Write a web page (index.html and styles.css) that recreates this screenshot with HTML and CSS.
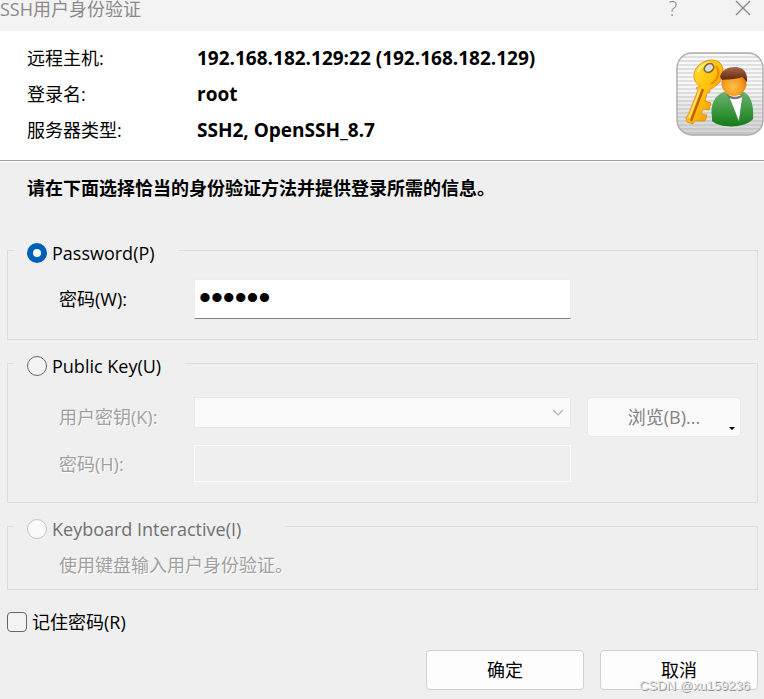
FILE: index.html
```html
<!DOCTYPE html>
<html lang="zh-CN">
<head>
    <meta charset="UTF-8">
    <title>SSH用户身份验证</title>
    <link rel="stylesheet" href="styles.css">
</head>

<body>
    <header class="titlebar">
        <h1>SSH用户身份验证</h1>
        <div class="window-buttons">
            <button type="button" class="window-button" aria-label="帮助">?</button>
            <button type="button" class="window-button" aria-label="关闭">
                <svg width="16" height="16" viewBox="0 0 16 16"><path d="M1 1L15 15M15 1L1 15" stroke="#8a8a8a" stroke-width="1.4" fill="none"/></svg>
            </button>
        </div>
    </header>

    <!-- Host details -->
    <section class="host">
        <dl class="host-info">
            <dt>远程主机:</dt>
            <dd>192.168.182.129:22 (192.168.182.129)</dd>
            <dt>登录名:</dt>
            <dd>root</dd>
            <dt>服务器类型:</dt>
            <dd>SSH2, OpenSSH_8.7</dd>
        </dl>
        <svg class="host-icon" width="88" height="84" viewBox="0 0 88 84">
            <defs>
                <pattern id="stripes" width="4" height="4" patternUnits="userSpaceOnUse">
                    <rect width="4" height="4" fill="#f8f8f8"/>
                    <rect width="4" height="2" fill="#e0e0e0"/>
                </pattern>
                <linearGradient id="shade" x1="0" y1="0" x2="0" y2="1">
                    <stop offset="0.4" stop-color="#999" stop-opacity="0"/>
                    <stop offset="1" stop-color="#999" stop-opacity="0.4"/>
                </linearGradient>
                <linearGradient id="gold" x1="0" y1="0" x2="1" y2="1">
                    <stop offset="0" stop-color="#ffe23a"/>
                    <stop offset="0.5" stop-color="#ffc20a"/>
                    <stop offset="1" stop-color="#e87c00"/>
                </linearGradient>
                <radialGradient id="face" cx="0.45" cy="0.65" r="0.65">
                    <stop offset="0" stop-color="#ffc04a"/>
                    <stop offset="0.6" stop-color="#f39a1c"/>
                    <stop offset="1" stop-color="#c8660c"/>
                </radialGradient>
                <linearGradient id="jacket" x1="0" y1="0" x2="0" y2="1">
                    <stop offset="0" stop-color="#6fb26a"/>
                    <stop offset="0.5" stop-color="#3f9a43"/>
                    <stop offset="1" stop-color="#137a17"/>
                </linearGradient>
                <linearGradient id="hair" x1="0" y1="0" x2="0" y2="1">
                    <stop offset="0" stop-color="#a86844"/>
                    <stop offset="1" stop-color="#5a1e06"/>
                </linearGradient>
            </defs>
            <rect x="1" y="1" width="86" height="82" rx="15" fill="url(#stripes)"/>
            <rect x="1" y="1" width="86" height="82" rx="15" fill="url(#shade)" stroke="#acacac" stroke-width="1.4"/>
            <path d="M24 34C17 30 16 22 21 15C27 8 37 6 43 10C49 15 48 25 43 31C40 34 37 36 34 37L34 40L31 41L29 49L35 51L33 58L27 57L25 62L31 63L29 69L19 69L17 72L11 70L10 66L13 61L22 38L20 36Z" fill="url(#gold)" stroke="#e08a10" stroke-width="0.8"/>
            <path d="M27 37L15 69" stroke="#c85a00" stroke-width="2.4"/>
            <path d="M24 38L13 66" stroke="#ffe880" stroke-width="1.5"/>
            <path d="M40 14C45 20 42 28 35 32" stroke="#f08c00" stroke-width="2.5" fill="none"/>
            <path d="M22 20C24 14 30 11 35 11" stroke="#fff29a" stroke-width="2" fill="none"/>
            <ellipse cx="33" cy="16" rx="5" ry="4" transform="rotate(-35 33 16)" fill="#dcdcdc" stroke="#7d6a2c" stroke-width="1.6"/>
            <path d="M36 65C34 54 38 43 48 40L68 40C76 44 78 56 77 67C70 76 45 77 36 69Z" fill="url(#jacket)"/>
            <path d="M52 43L67 43L63 70Z" fill="#fff"/>
            <path d="M52 43L63 70M67 43L63 70" stroke="#3f8a43" stroke-width="0.8" fill="none"/>
            <path d="M50 41C55 46 63 46 68 41L66 45C61 48 56 48 52 45Z" fill="#777"/>
            <ellipse cx="58" cy="31" rx="12.5" ry="13" fill="url(#face)"/>
            <path d="M44 25C45 18 52 15 59 15C67 15 72 20 71 30C69 28 68 26 66 25C59 28 51 27 46 28Z" fill="url(#hair)"/>
        </svg>
    </section>

    <form class="auth">
        <p class="auth-hint">请在下面选择恰当的身份验证方法并提供登录所需的信息。</p>

        <!-- Password -->
        <fieldset class="method">
            <legend>
                <input type="radio" name="method" id="methodPassword" checked>
                <label for="methodPassword">Password(P)</label>
            </legend>
            <div class="fields fields-password">
                <label for="password">密码(W):</label>
                <input type="password" id="password" class="text-box" value="123456">
            </div>
        </fieldset>

        <!-- Public key -->
        <fieldset class="method">
            <legend>
                <input type="radio" name="method" id="methodKey">
                <label for="methodKey">Public Key(U)</label>
            </legend>
            <div class="fields fields-key">
                <label class="disabled" for="userKey">用户密钥(K):</label>
                <div class="select-wrap">
                    <select id="userKey" disabled></select>
                    <svg class="select-arrow" width="12" height="8" viewBox="0 0 12 8"><path d="M1 1L6 6L11 1" fill="none" stroke="#b0b0b0" stroke-width="1.2"/></svg>
                </div>
                <button type="button" class="button browse" disabled>浏览(B)...</button>
                <label class="disabled" for="keyPassword">密码(H):</label>
                <input type="password" id="keyPassword" class="text-box" disabled>
            </div>
        </fieldset>

        <!-- Keyboard interactive -->
        <fieldset class="method">
            <legend class="legend-wide">
                <input type="radio" name="method" id="methodKeyboard" disabled>
                <label for="methodKeyboard">Keyboard Interactive(I)</label>
            </legend>
            <p class="method-note disabled">使用键盘输入用户身份验证。</p>
        </fieldset>

        <div class="remember">
            <input type="checkbox" id="remember">
            <label for="remember">记住密码(R)</label>
        </div>

        <div class="actions">
            <button type="submit" class="button">确定</button>
            <button type="button" class="button">取消</button>
        </div>
    </form>

    <div class="watermark">CSDN @xu159236</div>
</body>
</html>
```
FILE: styles.css
```css
* {
    box-sizing: border-box;
}

body {
    position: relative;
    margin: 0;
    background-color: #efefef;
    color: #000;
    font-family: "Open Sans", "Noto Sans CJK SC", sans-serif;
    font-size: 18px;
    line-height: 24px;
}

input,
select,
button {
    margin: 0;
    font: inherit;
}

.titlebar {
    display: flex;
    justify-content: space-between;
    height: 31px;
    padding-right: 13px;
    background-color: #f3f3f3;
    color: #8a8a8a;
}

.titlebar h1 {
    margin: 0;
    font-size: 18px;
    font-weight: normal;
    line-height: 18px;
}

.window-buttons {
    display: flex;
    align-items: flex-start;
    gap: 54px;
}

.window-button {
    display: flex;
    justify-content: center;
    width: 16px;
    padding: 0;
    border: none;
    background: none;
    color: #8a8a8a;
    font-size: 20px;
    font-weight: 300;
    line-height: 18px;
}

.host {
    display: flex;
    justify-content: space-between;
    align-items: center;
    padding: 9px 0 12px 27px;
    background-color: #fff;
    border-bottom: 1px solid #a0a0a0;
}

.host-info {
    display: grid;
    grid-template-columns: 170px auto;
    margin: 0;
    line-height: 36px;
}

.host-info dd {
    margin: 0;
    font-size: 19px;
    font-weight: bold;
}

.host-icon {
    display: block;
}

.auth {
    padding: 14px 6px 9px 7px;
    border-top: 1px solid #fff;
}

.auth-hint {
    margin: 0 0 35px 20px;
    font-weight: bold;
}

.method {
    min-width: 0;
    margin: 0 0 8px;
    padding: 0 16px 0 6px;
    border: 1px solid #dcdcdc;
}

.method legend {
    display: flex;
    align-items: center;
    gap: 5px;
    padding: 6px 24px 0 13px;
}

.method .legend-wide {
    padding-right: 44px;
}

input[type="radio"] {
    appearance: none;
    width: 20px;
    height: 20px;
    border: 1px solid #666;
    border-radius: 50%;
    background-color: #f3f3f3;
}

input[type="radio"]:checked {
    border: 6px solid #005fb8;
    background-color: #fff;
}

input[type="radio"]:disabled {
    border-color: #c4c4c4;
    background-color: #fafafa;
}

input[type="radio"]:disabled + label {
    color: #707070;
}

.fields {
    display: grid;
    grid-template-columns: 135px 1fr 154px;
    row-gap: 8px;
    align-items: center;
    padding-left: 45px;
}

.fields-password {
    padding-top: 14px;
    padding-bottom: 20px;
}

.fields-key {
    padding-top: 19px;
    padding-bottom: 20px;
}

.text-box {
    height: 40px;
    min-width: 0;
    margin-right: 16px;
    padding: 0 4px 4px;
    border: 1px solid #ececec;
    border-bottom-color: #808080;
    background-color: #fff;
    font-family: "Liberation Sans", sans-serif;
    font-size: 34px;
}

.text-box:disabled {
    height: 37px;
    border-color: #fbfbfb;
    background-color: #efefef;
}

.select-wrap {
    position: relative;
    align-self: start;
    margin-right: 16px;
}

.select-wrap select {
    appearance: none;
    display: block;
    width: 100%;
    height: 31px;
    border: 1px solid #e8e8e8;
    border-radius: 0;
    background-color: #fafafa;
    opacity: 1;
}

.select-arrow {
    position: absolute;
    top: 12px;
    right: 7px;
}

.disabled {
    color: #a0a0a0;
    text-shadow: 1px 1px 0 #fff;
}

.button {
    width: 158px;
    height: 40px;
    border: 1px solid #d0d0d0;
    border-radius: 4px;
    background-color: #fdfdfd;
    color: #000;
}

.browse {
    position: relative;
    width: 100%;
    border-color: #e8e8e8;
    background-color: #f9f9f9;
    color: #838383;
}

.browse::after {
    content: "";
    position: absolute;
    right: 5px;
    bottom: 6px;
    border: 3px solid transparent;
    border-top-color: #000;
    border-bottom: none;
}

.method-note {
    margin: 0;
    padding: 12px 0 12px 45px;
}

.remember {
    display: flex;
    align-items: center;
    gap: 5px;
    padding-top: 12px;
}

input[type="checkbox"] {
    appearance: none;
    width: 20px;
    height: 20px;
    border: 1px solid #666;
    border-radius: 4px;
    background-color: #f3f3f3;
}

.actions {
    display: flex;
    justify-content: flex-end;
    gap: 16px;
    padding-top: 16px;
}

.watermark {
    position: absolute;
    right: 14px;
    bottom: 4px;
    color: #e4e4e4;
    font-family: "Liberation Sans", sans-serif;
    font-size: 13px;
    line-height: 18px;
    text-shadow: 1px 1px 0 #999;
    pointer-events: none;
}
```
